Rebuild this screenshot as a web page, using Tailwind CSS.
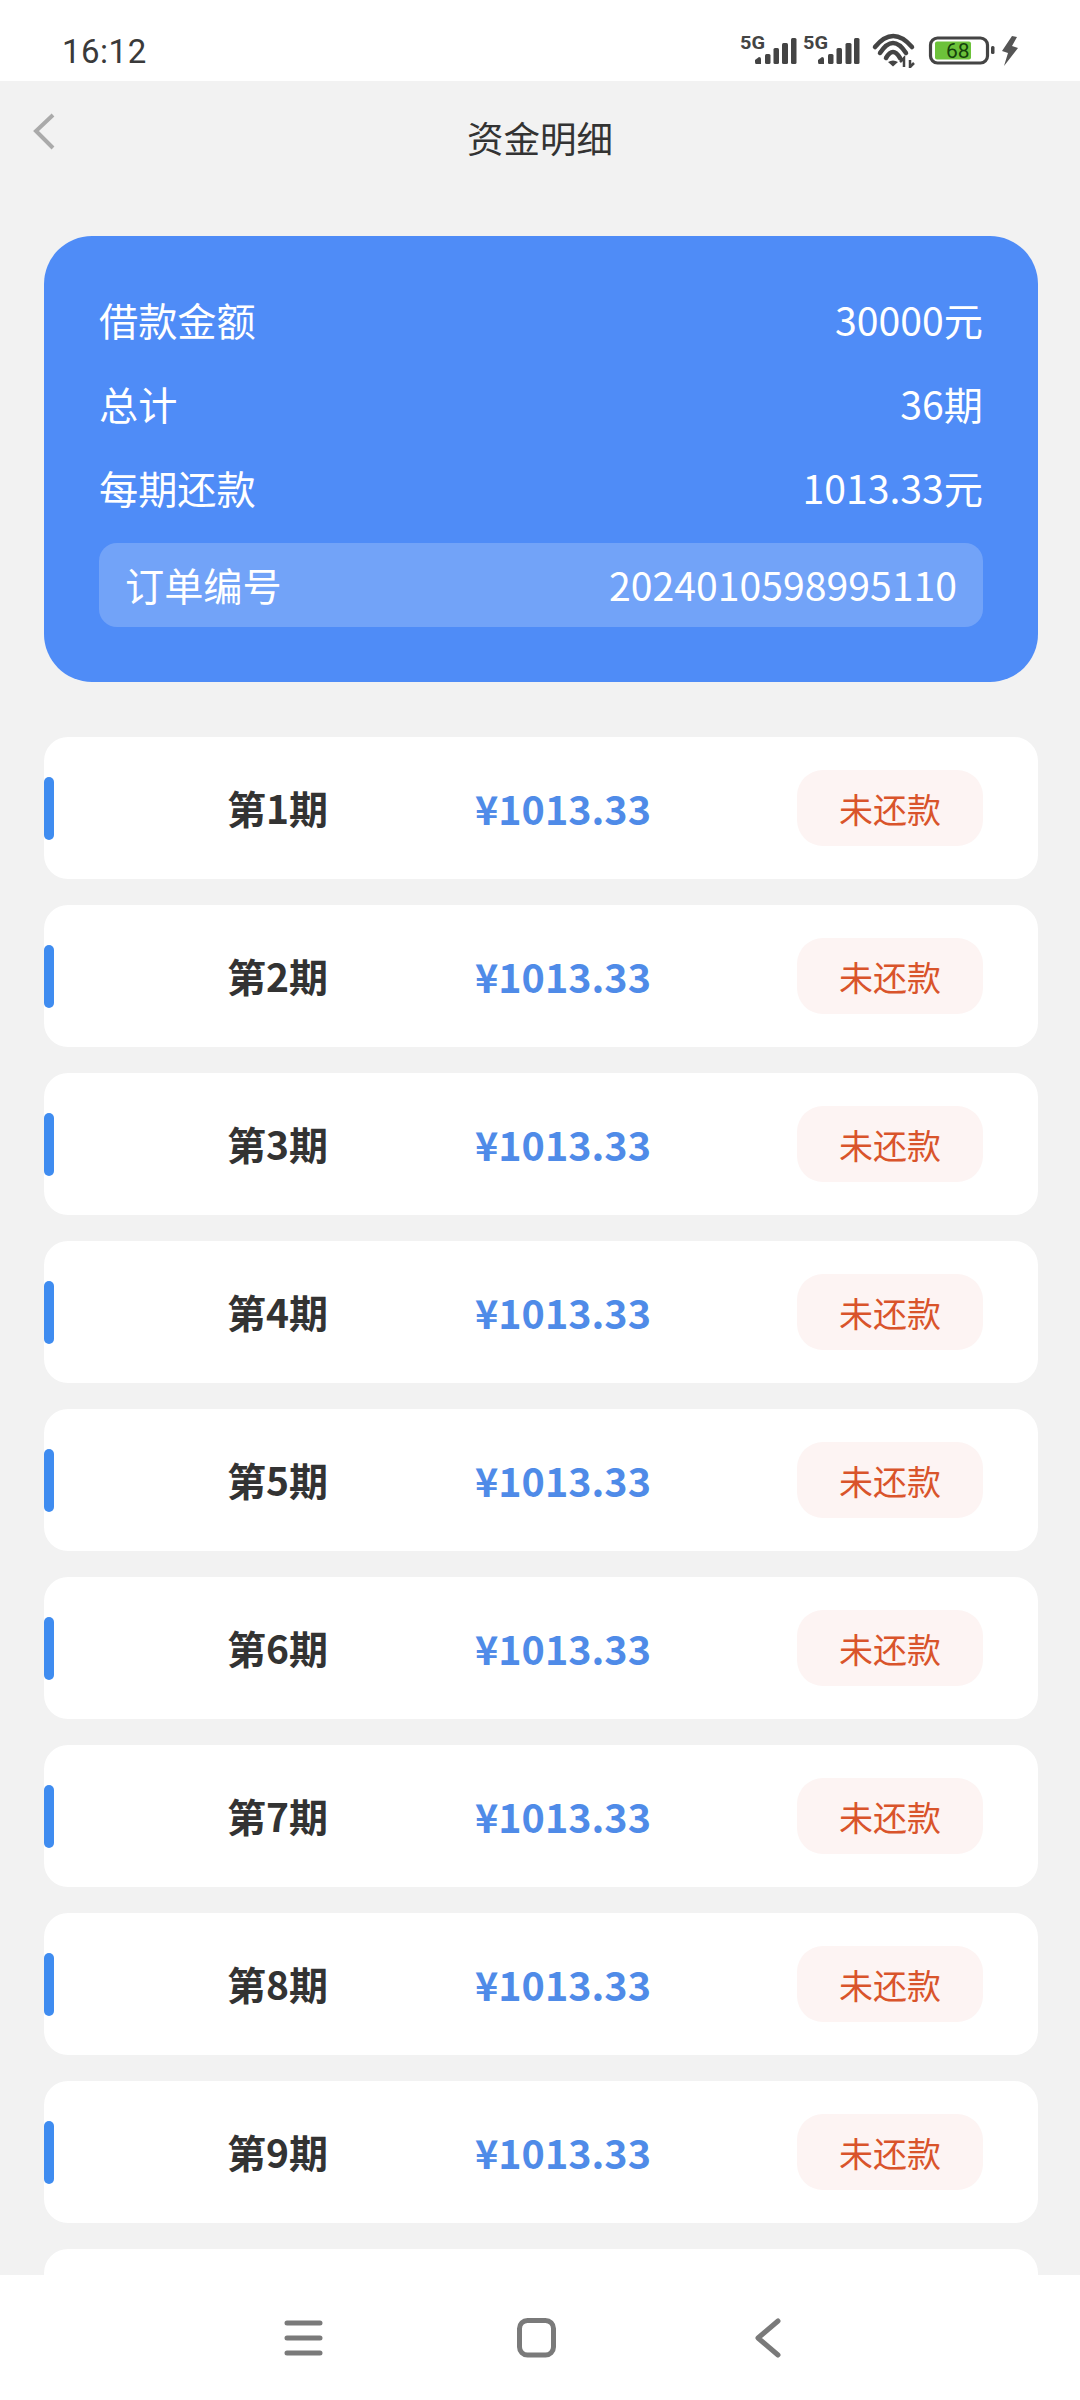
<!DOCTYPE html>
<html lang="zh">
<head>
    <meta charset="UTF-8">
    <meta name="viewport" content="width=device-width, initial-scale=1.0">
    <title>资金明细</title>
    <script src="https://cdn.jsdelivr.net/npm/@tailwindcss/browser@4"></script>
</head>
<body class="bg-[#f2f2f2] font-['Noto_Sans_CJK_SC','Noto_Sans',sans-serif]">
    <div class="h-[2400px] w-[1080px] flex flex-col overflow-hidden">
        <!-- Status bar -->
        <div class="h-[81px] shrink-0 bg-white flex justify-between">
            <span class="ml-[62px] mt-[29px] text-[33px] leading-[46px] text-[#3a3a3a] font-['Roboto',sans-serif] tracking-[0.5px]">16:12</span>
            <svg class="w-[380px] h-[81px]" viewBox="700 0 380 81">
                <g fill="#444">
                    <text x="740" y="49" font-family="Roboto, sans-serif" font-weight="700" font-size="19" textLength="25" lengthAdjust="spacingAndGlyphs">5G</text>
                    <path d="M755 60 L759 57 Q761 57 761 59 V64 H756 Q755 64 755 62 Z"/>
                    <rect x="765" y="54" width="5.5" height="10" rx="1.5"/>
                    <rect x="773.5" y="48" width="5.5" height="16" rx="1.5"/>
                    <rect x="782" y="43" width="6" height="21" rx="1.5"/>
                    <rect x="791" y="38" width="5.5" height="26" rx="1.5"/>
                    <text x="803" y="49" font-family="Roboto, sans-serif" font-weight="700" font-size="19" textLength="25" lengthAdjust="spacingAndGlyphs">5G</text>
                    <path d="M818 60 L822 57 Q824 57 824 59 V64 H819 Q818 64 818 62 Z"/>
                    <rect x="828" y="54" width="5.5" height="10" rx="1.5"/>
                    <rect x="836.5" y="48" width="5.5" height="16" rx="1.5"/>
                    <rect x="845.5" y="43" width="6" height="21" rx="1.5"/>
                    <rect x="854" y="38" width="5.5" height="26" rx="1.5"/>
                </g>
                <g fill="none" stroke="#444" stroke-width="4.5" stroke-linecap="round">
                    <path d="M875 47 Q893 25 912 47"/>
                    <path d="M880 53 Q893 33 906 53"/>
                    <path d="M886 58 Q893 46 900 58"/>
                </g>
                <path d="M888 62 Q893 59 898 62 L893 66.5 Z" fill="#444"/>
                <path d="M904 67 V59 M900 62 L904 58 V61 M910 60 V68 M910 67 L914 63" stroke="#444" stroke-width="2.5" fill="none"/>
                <rect x="930.5" y="38" width="57" height="25" rx="7" fill="#fff" stroke="#444" stroke-width="3.2"/>
                <rect x="935" y="41.5" width="36" height="18" rx="2" fill="#6cc23a"/>
                <text x="946" y="58" font-family="Roboto, sans-serif" font-size="21" fill="#14420c">68</text>
                <rect x="991" y="46" width="3.5" height="8" rx="1.5" fill="#444"/>
                <path d="M1012 36 L1002 51 L1008 53 L1004 66 L1018 48 L1012 46 L1017 37 Z" fill="#555"/>
            </svg>
        </div>

        <!-- Header -->
        <div class="h-[155px] shrink-0 relative">
            <h1 class="pt-[33px] text-center text-[36.5px] leading-[48px] text-[#333] font-normal">资金明细</h1>
            <svg class="absolute left-[32px] top-[32px] w-[24px] h-[38px]" viewBox="0 0 24 38" fill="none" stroke="#aaa" stroke-width="4">
                <path d="M21 2 L4 18 L21 35"/>
            </svg>
        </div>

        <!-- Summary card -->
        <div class="mx-[44px] w-[994px] h-[446px] shrink-0 rounded-[48px] bg-[#4f8cf7] text-white text-[39.2px] px-[55px] pt-[41px]">
            <div class="h-[84px] flex items-center justify-between"><span>借款金额</span><span>30000元</span></div>
            <div class="h-[84px] flex items-center justify-between"><span>总计</span><span>36期</span></div>
            <div class="h-[84px] flex items-center justify-between"><span>每期还款</span><span>1013.33元</span></div>
            <div class="mt-[14px] h-[84px] pb-[2px] rounded-[18px] bg-white/20 px-[26px] flex items-center justify-between"><span>订单编号</span><span>2024010598995110</span></div>
        </div>

        <!-- Period list -->
        <div class="mt-[55px] min-h-0 flex-1 overflow-hidden">
            <div id="periods" class="mx-[44px] w-[994px] flex flex-col gap-[26px]"></div>
        </div>

        <!-- Navigation bar -->
        <div class="h-[125px] shrink-0 bg-white">
            <svg class="w-[1080px] h-[125px]" viewBox="0 2275 1080 125" fill="none" stroke="#7a7a7a" stroke-width="5" stroke-linecap="round" stroke-linejoin="round">
                <path d="M287 2323 H320 M287 2338 H320 M287 2353 H320"/>
                <rect x="519.5" y="2320.5" width="34" height="34.5" rx="8"/>
                <path d="M778 2321 L758 2338 L778 2355"/>
            </svg>
        </div>
    </div>

    <script>
        const rows = [];
        for (let i = 1; i <= 9; i++) {
            rows.push(`
                <div class="h-[142px] shrink-0 rounded-[24px] bg-white flex items-center">
                    <div class="w-[10px] h-[63px] rounded-full bg-[#3f8cf0]"></div>
                    <div class="ml-[173px] -mt-[2px] w-[100px] text-[39px] font-bold text-[#333] whitespace-nowrap">第${i}期</div>
                    <div class="ml-[148px] -mt-[1px] text-[39.5px] font-semibold text-[#4f8be8]">¥1013.33</div>
                    <div class="ml-auto mr-[55px] w-[186px] h-[76px] rounded-[26px] bg-[#fdf4f3] text-[34px] text-[#d9542b] flex items-center justify-center">未还款</div>
                </div>
            `);
        }
        // the tenth row only shows its top edge above the nav bar
        rows.push('<div class="h-[142px] shrink-0 rounded-[24px] bg-white"></div>');
        document.getElementById('periods').innerHTML = rows.join('');
    </script>
</body>
</html>
